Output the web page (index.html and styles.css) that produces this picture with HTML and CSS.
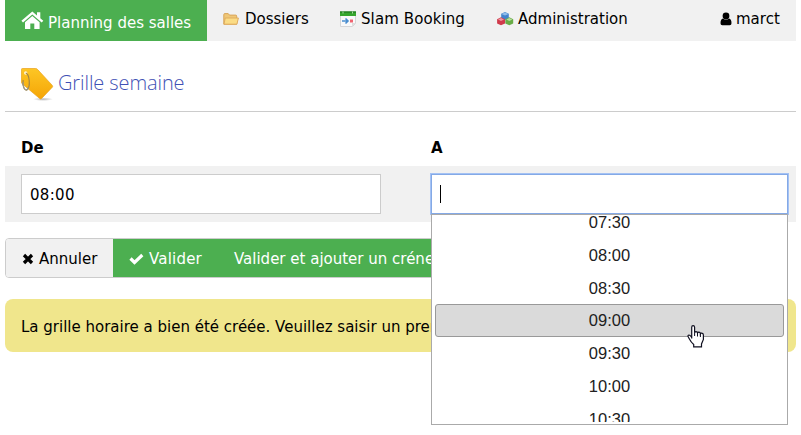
FILE: index.html
```html
<!DOCTYPE html>
<html lang="fr">
<head>
<meta charset="utf-8">
<title>Grille semaine</title>
<link rel="stylesheet" href="styles.css">
</head>
<body>
<nav class="nav">
  <a class="nav-item active">
    <svg class="home" width="23" height="20" viewBox="0 0 23 20" fill="#fff"><path d="M11.3 0.5 0.4 9.8l1.6 1.8 9.3-8.1 9.4 8.1 1.6-1.800L19.300 7.3V1.2h-3.300v3.3z"/><path d="M11.3 4.900 4 11.200V18h5.300v-5.500h4V18h5.300v-6.800z"/></svg>
    <span>Planning des salles</span>
  </a>
  <a class="nav-item">
    <svg width="16" height="16" viewBox="0 0 16 16"><path d="M.8 13.200V3.600q0-1 1-1h3.400l1.300 1.500h6.200q1 0 1 1v8.100z" fill="#efc777" stroke="#d8a55b"/><path d="M2.200 7h13.200l-1.500 6.200H1z" fill="#fbdc85" stroke="#dfac60"/></svg>
    <span>Dossiers</span>
  </a>
  <a class="nav-item">
    <svg width="16" height="16" viewBox="0 0 16 16"><path d="M.5 4h15v8.500l-3 3H.5z" fill="#f9f9fa" stroke="#d6d6d8"/><path d="M12 15.500V12h3.500z" fill="#ddd"/><path d="M0 .5h16V5H0z" fill="#35a52d"/><path d="M0 .5h16v1H0z" fill="#196d1a"/><path d="M3 .5v2M12.500 .5v2" stroke="#a7dca0"/><path d="M2 10h6M5.500 7.500 8 10 5.500 12.500" fill="none" stroke="#4a8ed0" stroke-width="1.600"/><path d="M10 8.500h3v3h-3z" fill="#ef6470"/></svg>
    <span>Slam Booking</span>
  </a>
  <a class="nav-item">
    <svg class="cubes" width="17" height="16" viewBox="0 0 17 16"><path d="m8 1 3.800 1.700v4.500L8 9 4.200 7.200V2.700z" fill="#4384cd"/><path d="m4.500 3 3.500-1.400L11.500 3 8 4.500z" fill="#91bdea"/><path d="m4 6.300 4 1.900v4.200l-4 1.900-3.900-1.900V8.200z" fill="#d03a4b"/><path d="m1 8.400 3-1.300 3 1.300-3 1.500z" fill="#ef98a1"/><path d="m12.300 6.300 3.900 1.900v4.200l-3.900 1.900-4-1.900V8.200z" fill="#68ac46"/><path d="m9.300 8.400 3-1.300 3 1.300-3 1.500z" fill="#b8dda1"/></svg>
    <span>Administration</span>
  </a>
  <a class="nav-item user">
    <svg width="12" height="14" viewBox="0 0 12 14"><circle cx="6" cy="4" r="3.400"/><path d="M3 6.400Q6 9 9 6.400q2.500.4 2.500 4.800 0 2-1.800 2H2.300q-1.800 0-1.800-2Q.5 6.800 3 6.400z"/></svg>
    <span>marct</span>
  </a>
</nav>

<header class="heading">
  <svg class="tag" width="34" height="34" viewBox="0 0 34 34">
    <defs>
      <linearGradient id="tag" x1="0" y1="0" x2="0" y2="1"><stop offset="0" stop-color="#fdc625"/><stop offset="1" stop-color="#f5a506"/></linearGradient>
      <radialGradient id="shade"><stop offset="0" stop-color="#888" stop-opacity=".6"/><stop offset="1" stop-color="#888" stop-opacity="0"/></radialGradient>
    </defs>
    <ellipse cx="22" cy="31.200" rx="10" ry="1.800" fill="url(#shade)"/>
    <path d="M1.500.5h13.200q1 0 1.700.8L31.300 17.400q.8.900 0 1.800L20.600 30.500q-1 .9-1.900 0L.9 15.500q-.5-.6-.5-1.500V1.500q0-1 1.100-1z" fill="url(#tag)" stroke="#e9a11a" stroke-width=".7"/>
    <circle cx="4.700" cy="5" r="1.700" fill="#fff3cd"/>
    <path d="M4.800 5c3.800 1.500 4.700 13 1.700 16.500C3.500 24 1 17 2.200 12" fill="none" stroke="#a28747" stroke-width="1.200"/>
    <path d="M7.300 19.500Q5.500 24 3 20 1.700 17.500 2 14" fill="none" stroke="#98998f" stroke-width="1.100"/>
  </svg>
  <h1>Grille semaine</h1>
</header>

<main>
  <div class="labels"><b>De</b><b>A</b></div>
  <div class="fields">
    <div class="field">08:00</div>
    <div class="picker">
      <div class="field focused"><i class="caret"></i></div>
      <div class="menu">
        <div class="times">
          <div class="time">07:30</div>
          <div class="time">08:00</div>
          <div class="time">08:30</div>
          <div class="time selected">09:00</div>
          <div class="time">09:30</div>
          <div class="time">10:00</div>
          <div class="time">10:30</div>
        </div>
        <svg class="pointer" width="18" height="23" viewBox="0 0 18 23"><path d="M4.700 13.500V2.300q0-1.600 1.400-1.600t1.500 1.600v5.500q.2-1.200 1.400-1.200 1.500 0 1.500 1.600.3-1 1.400-1 1.400 0 1.500 1.600.4-.8 1.400-.7 1.600.2 1.600 2v4.400l-1.900 4.400v2.900H6.700v-2.300Q4 17.200 2.100 13.500L.9 11.200q.2-1.500 1.700-1 .8.300 2.100 2.200z" fill="#fff" stroke="#101020" stroke-width="1.200"/><path d="M7.600 7.500V11M10.500 8v3.500M13.400 9v3" stroke="#101020"/></svg>
      </div>
    </div>
  </div>

  <div class="buttons">
    <button class="btn cancel"><svg width="12" height="12" viewBox="0 0 12 12"><path d="m2 2 8 8M10 2l-8 8" stroke="#000" stroke-width="3.300"/></svg><span>Annuler</span></button>
    <button class="btn ok"><svg width="15" height="12" viewBox="0 0 15 12"><path d="m1.500 5.500 4 4L13.300 2" fill="none" stroke="#fff" stroke-width="3.200"/></svg><span>Valider</span></button>
    <button class="btn add"><span>Valider et ajouter un créneau</span></button>
  </div>

  <div class="notice"><span>La grille horaire a bien été créée. Veuillez saisir un premier créneau.</span></div>
</main>
</body>
</html>
```
FILE: styles.css
```css
* { box-sizing: border-box; }
html { overflow: hidden; }
body {
  margin: 0;
  padding: 0 5px;
  width: 801px;
  height: 435px;
  overflow: hidden;
  background: #fff;
  color: #000;
  font: 15px/22px "DejaVu Sans", Verdana, sans-serif;
}
svg { display: block; flex: none; }
.nav { display: flex; height: 41px; width: 791px; background: #f1f1f1; }
.nav-item {
  display: flex;
  align-items: center;
  gap: 6px;
  padding: 0 0 3px 16px;
  width: 117px;
  white-space: nowrap;
}
.nav-item:nth-child(3) { width: 157px; gap: 5px; letter-spacing: 0.1px; }
.nav-item:nth-child(4) { width: 150px; gap: 4px; }
.nav-item.active { width: 202px; gap: 4px; padding-bottom: 0; background: #4caf50; color: #fff; }
.active span { padding-top: 4px; }
.nav-item.user { margin-left: auto; width: 92px; gap: 4px; }
.heading {
  display: flex;
  align-items: center;
  gap: 3px;
  width: 791px;
  height: 71px;
  padding: 16px 16px 3px;
  border-bottom: 1px solid #ccc;
}
.tag { margin-top: 5px; }
h1 {
  margin: 0;
  color: #3f51b5;
  font: 300 20px/30px "Open Sans", "Noto Sans", sans-serif;
  letter-spacing: -0.1px;
}
.labels {
  display: grid;
  grid-template-columns: 410px 1fr;
  height: 54px;
  padding: 25px 16px 0;
}
.fields {
  display: grid;
  grid-template-columns: 360px 357px;
  column-gap: 50px;
  width: 791px;
  height: 56px;
  padding: 8px 16px;
  background: #f1f1f1;
}
.field {
  display: flex;
  align-items: center;
  height: 40px;
  padding: 2px 8px 0;
  border: 1px solid #ccc;
  background: #fff;
  letter-spacing: 0.3px;
}
.focused { padding-top: 0; border-color: #84a9e6; box-shadow: 0 0 0 1px #a4c2f4; }
.caret { width: 1px; height: 18px; background: #000; }
.picker { position: relative; }
.menu {
  position: absolute;
  top: 40px;
  left: 0;
  width: 357px;
  height: 211px;
  padding: 1px 3px 2px;
  border: 1px solid #aaa;
  background: #fff;
}
.times { height: 206px; overflow: hidden; }
.time {
  height: 32.67px;
  border: 1px solid transparent;
  border-radius: 3px;
  color: #212121;
  font: 16.5px/31px "Liberation Sans", Arial, sans-serif;
  text-align: center;
}
.time:first-child { margin-top: -9.6px; }
.time.selected { height: 33px; background: #dadada; border-color: #999; }
.pointer { position: absolute; left: 255px; top: 110px; }
.buttons {
  display: flex;
  width: 600px;
  height: 40px;
  margin-top: 16px;
  border: 1px solid #ccc;
  border-radius: 4px;
  overflow: hidden;
}
.btn {
  display: flex;
  align-items: center;
  gap: 5px;
  padding: 2px 0 0 16px;
  border: 0;
  background: #4caf50;
  color: #fff;
  font: inherit;
  white-space: nowrap;
}
.cancel { width: 107px; background: #f1f1f1; color: #000; }
.ok { width: 105px; letter-spacing: 0.2px; }
.add { flex: 1; }
.notice {
  display: flex;
  align-items: center;
  width: 791px;
  height: 53px;
  margin-top: 21px;
  padding: 2px 16px 0;
  border-radius: 8px;
  background: #f0e68c;
  white-space: nowrap;
  overflow: hidden;
}
```
